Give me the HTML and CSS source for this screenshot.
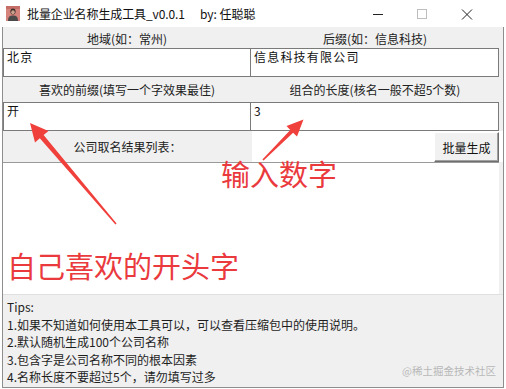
FILE: index.html
```html
<!DOCTYPE html>
<html lang="zh">
<head>
<meta charset="utf-8">
<title>批量企业名称生成工具</title>
<link rel="stylesheet" href="styles.css">
</head>
<body>
<div class="titlebar">
  <svg class="app-icon" width="14" height="15" viewBox="0 0 14 15">
    <rect width="14" height="15" fill="#d4847c"/>
    <rect x="0" y="0" width="14" height="3" fill="#c46e67"/>
    <ellipse cx="7" cy="5.5" rx="2.6" ry="3" fill="#3b302c"/>
    <ellipse cx="7" cy="6.3" rx="1.8" ry="2" fill="#c9a08c"/>
    <path d="M2 15 C2 10.5 4 9.5 7 9.5 C10 9.5 12 10.5 12 15 Z" fill="#4a4a4a"/>
  </svg>
  <span class="title-text">批量企业名称生成工具_v0.0.1</span>
  <span class="title-by">by: 任聪聪</span>
  <div class="controls">
    <svg class="ctl" width="44" height="26" viewBox="0 0 44 26"><line x1="17" y1="13.5" x2="27" y2="13.5" stroke="#222" stroke-width="1"/></svg>
    <svg class="ctl" width="44" height="26" viewBox="0 0 44 26"><rect x="17.5" y="8.5" width="9" height="9" fill="none" stroke="#bdbdbd" stroke-width="1"/></svg>
    <svg class="ctl" width="46" height="26" viewBox="0 0 46 26"><path d="M18 8.5 L28 18.5 M28 8.5 L18 18.5" stroke="#222" stroke-width="1"/></svg>
  </div>
</div>
<div class="window">
  <div class="grid">
    <div class="label label-top">地域(如：常州)</div>
    <div class="label label-top">后缀(如：信息科技)</div>
    <div class="field">北京</div>
    <div class="field field-right">信息科技有限公司</div>
    <div class="label">喜欢的前缀(填写一个字效果最佳)</div>
    <div class="label">组合的长度(核名一般不超5个数)</div>
    <div class="field">开</div>
    <div class="field field-right">3</div>
  </div>
  <div class="action-row">
    <div class="label action-label">公司取名结果列表：</div>
    <div class="action-space"></div>
    <button class="btn">批量生成</button>
  </div>
  <div class="listbox"></div>
  <div class="tips">
    <div>Tips:</div>
    <div>1.如果不知道如何使用本工具可以，可以查看压缩包中的使用说明。</div>
    <div>2.默认随机生成100个公司名称</div>
    <div>3.包含字是公司名称不同的根本因素</div>
    <div>4.名称长度不要超过5个，请勿填写过多</div>
    <span class="watermark">@稀土掘金技术社区</span>
  </div>
</div>

<svg class="arrows" width="506" height="389" viewBox="0 0 506 389">
  <polygon points="30,123 48.5,131 43.6,135.1 116.6,223.5 115.4,224.5 39.8,138.3 35,142.5" fill="#f0403c"/>
  <polygon points="303.5,119.5 297,136.5 293.1,132.7 263.6,160.6 262.4,159.4 290.3,129.9 286.5,126" fill="#f0403c"/>
</svg>
<div class="note note-digits">输入数字</div>
<div class="note note-prefix">自己喜欢的开头字</div>
</body>
</html>
```
FILE: styles.css
```css
* { box-sizing: border-box; }
html, body {
  margin: 0;
  padding: 0;
  background: #ffffff;
  width: 506px;
  height: 389px;
  overflow: hidden;
  font-family: "Noto Sans CJK SC", "Noto Sans", sans-serif;
  font-size: 12px;
  color: #1e1e1e;
}
body { position: relative; }

.titlebar {
  height: 27px;
  display: flex;
  align-items: center;
  background: #ffffff;
  padding-left: 6px;
}
.app-icon { flex: none; margin-right: 7px; }
.title-text { font-size: 12px; color: #111; letter-spacing: -0.1px; }
.title-by { font-size: 12px; color: #111; margin-left: 15px; }
.controls {
  margin-left: auto;
  display: flex;
  margin-right: 16px;
}
.ctl { display: block; }

.window {
  width: 502px;
  margin-left: 2px;
  border: 1px solid #8e8e8e;
  border-top: none;
  background: #f0f0f0;
  height: 361px;
}
.grid {
  display: grid;
  grid-template-columns: 248px 248px;
  grid-template-rows: 21px 29px 25px 29px;
}
.label {
  background: #f0f0f0;
  display: flex;
  align-items: center;
  justify-content: center;
  color: #222;
}
.label-top { padding-top: 1px; }
.field {
  background: #ffffff;
  border: 1px solid #7a7a7a;
  padding: 0 3px;
  line-height: 14px;
  padding-top: 1px;
  letter-spacing: 1.2px;
  color: #111;
}
.field-right { border-left: none; }

.action-row {
  display: flex;
  height: 31px;
  background: #ffffff;
  padding-right: 4px;
}
.action-label { width: 249px; flex: none; }
.action-space { flex: 1; background: #ffffff; }
.btn {
  width: 65px;
  height: 30px;
  margin-top: 1px;
  font-family: inherit;
  font-size: 12px;
  color: #111;
  background: #f1f1f1;
  border: 1px solid #ffffff;
  border-right: 1px solid #6e6e6e;
  border-bottom: 1px solid #6e6e6e;
  box-shadow: inset -1px -1px 0 #a0a0a0;
  padding: 0;
}
.listbox {
  height: 132px;
  background: #ffffff;
  border-top: 1px solid #9a9a9a;
  margin-right: 4px;
}
.tips {
  position: relative;
  background: #f0f0f0;
  padding: 3px 0 0 4px;
  height: 92px;
  line-height: 17.5px;
  color: #1e1e1e;
  border-top: 1px solid #e0e0e0;
}
.watermark {
  position: absolute;
  right: 7px;
  bottom: 8px;
  font-size: 10.5px;
  color: #b8b8b8;
  line-height: 14px;
}

.arrows { position: absolute; left: 0; top: 0; pointer-events: none; }
.note {
  position: absolute;
  color: #ea3a3e;
  font-size: 29px;
  line-height: 29px;
  white-space: nowrap;
}
.note-digits { left: 221px; top: 159px; }
.note-prefix { left: 7px; top: 251px; }
```
